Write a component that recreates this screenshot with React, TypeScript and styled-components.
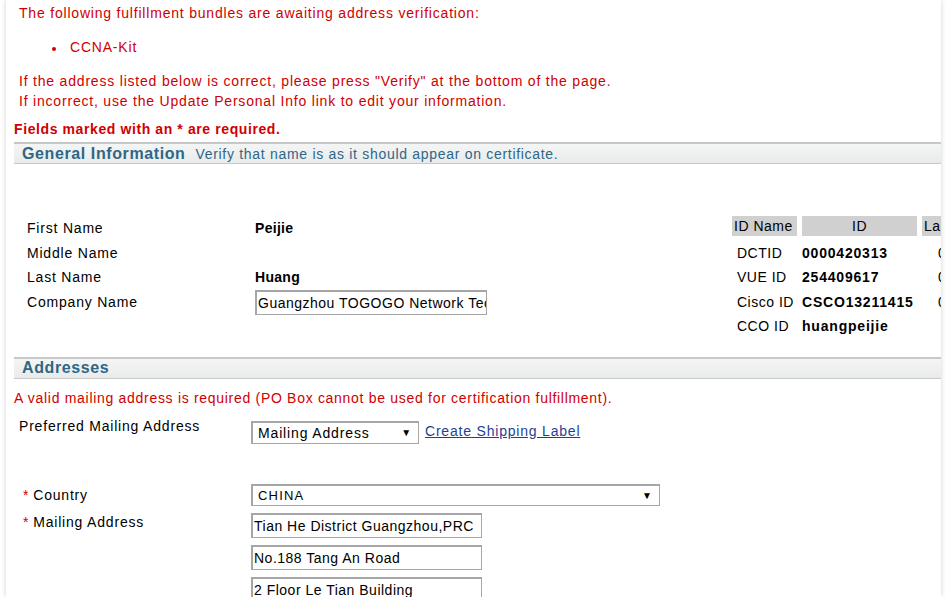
import React from 'react'
import styled, { createGlobalStyle } from 'styled-components'

const Global = createGlobalStyle`
  html, body { margin: 0; padding: 0; background: #fff; }
  body {
    font-family: "Liberation Sans", Arial, sans-serif;
    font-size: 14px;
    letter-spacing: 0.8px;
    color: #000;
  }
`

const Frame = styled.div`
  margin-left: 6px;
  width: 935px;
  height: 597px;
  overflow: hidden;
  background: #fff;
  box-shadow: 0 0 5px rgba(0, 0, 0, 0.18);
`
const Content = styled.div`
  padding-left: 8px;
  width: 1000px;
`
const Notice = styled.div<any>`
  color: #d00000;
  line-height: 20px;
  padding-left: 5px;
  margin-top: ${({ mt }) => mt || 0}px;
`
const BundleList = styled.ul`
  margin: 14px 0 0 0;
  padding-left: 52px;
  color: #d00000;
  line-height: 20px;
  li::marker { font-size: 12px; }
  li { padding-left: 4px; }
`
const Required = styled.div`
  color: #d00000;
  font-weight: bold;
  line-height: 20px;
  letter-spacing: 0.6px;
  margin-top: 8px;
`
const SectionBar = styled.div<any>`
  display: flex;
  align-items: center;
  height: 19px;
  margin-top: ${({ mt }) => mt || 0}px;
  padding-left: 8px;
  border-top: 2px solid #c8c8c8;
  border-bottom: 1px solid #c8c8c8;
  background: linear-gradient(#f4f5f5, #e9ebeb);
  color: #2f6686;
`
const SectionTitle = styled.span`
  font-size: 16px;
  font-weight: bold;
  letter-spacing: 0.6px;
`
const SectionNote = styled.span`
  letter-spacing: 0.7px;
  margin-left: 10px;
`
const InfoWrap = styled.div`
  display: flex;
  margin-top: 52px;
`
const NameTable = styled.div`
  display: grid;
  grid-template-columns: 228px 260px;
  grid-auto-rows: 24.5px;
  padding-left: 13px;
  width: 705px;
  align-content: start;
`
const NameLabel = styled.div`
  display: flex;
  align-items: center;
`
const NameValue = styled.div`
  display: flex;
  align-items: center;
  font-weight: bold;
  letter-spacing: 0.3px;
`
const TextBox = styled.div<any>`
  box-sizing: border-box;
  width: ${({ w }) => w}px;
  height: 25px;
  border: 1px solid #a6a6a6;
  border-left-width: 2px;
  border-top-width: 2px;
  padding-left: ${({ pl }) => pl ?? 1}px;
  display: flex;
  align-items: center;
  font-weight: normal;
  letter-spacing: 0.5px;
  white-space: nowrap;
  overflow: hidden;
  background: #fff;
  margin-top: ${({ mt }) => mt || 0}px;
`
const IdTable = styled.div`
  display: grid;
  grid-template-columns: 65px 115px 40px;
  column-gap: 5px;
  grid-auto-rows: 24.5px;
`
const IdHead = styled.div<any>`
  background: #d0d0d0;
  height: 20px;
  display: flex;
  align-items: center;
  justify-content: ${({ center }) => (center ? 'center' : 'flex-start')};
  padding-left: ${({ center }) => (center ? 0 : 2)}px;
  letter-spacing: 0.5px;
`
const IdName = styled.div`
  display: flex;
  align-items: center;
  padding-left: 5px;
  white-space: nowrap;
  letter-spacing: 0.5px;
`
const IdValue = styled.div`
  display: flex;
  align-items: center;
  font-weight: bold;
  letter-spacing: 0.8px;
`
const IdLang = styled.div`
  display: flex;
  align-items: center;
  padding-left: 16px;
`
const Warning = styled.div`
  color: #d00000;
  line-height: 20px;
  letter-spacing: 0.7px;
  margin-top: 9px;
`
const FormRow = styled.div<any>`
  display: grid;
  grid-template-columns: 237px auto;
  align-items: start;
  margin-top: ${({ mt }) => mt || 0}px;
`
const FormLabel = styled.div<any>`
  line-height: 20px;
  padding-left: ${({ pl }) => pl || 5}px;
  padding-top: ${({ pt }) => pt || 0}px;
`
const Star = styled.span`
  color: #d00000;
  margin-right: 4px;
`
const Inline = styled.div`
  display: flex;
  align-items: center;
  margin-top: 5px;
`
const SelectBox = styled.div<any>`
  box-sizing: border-box;
  width: ${({ w }) => w}px;
  height: ${({ h }) => h}px;
  border: 1px solid #a6a6a6;
  border-left-width: 2px;
  border-top-width: 2px;
  display: flex;
  align-items: center;
  justify-content: space-between;
  padding: 0 6px 0 5px;
  background: #fff;
  font-size: ${({ fs }) => fs || 14}px;
  letter-spacing: ${({ ls }) => ls ?? 0.85}px;
`
const Arrow = styled.span`
  font-size: 10px;
`
const LinkText = styled.a`
  color: #1d3f97;
  text-decoration: underline;
  margin-left: 6px;
  margin-top: -2px;
`
const AddressStack = styled.div`
  display: flex;
  flex-direction: column;
  gap: 7px;
  margin-top: 1px;
`

const names = [
  { label: 'First Name', value: 'Peijie' },
  { label: 'Middle Name', value: '' },
  { label: 'Last Name', value: 'Huang' },
]

const ids = [
  { name: 'DCTID', id: '0000420313', lang: '0' },
  { name: 'VUE ID', id: '254409617', lang: '0' },
  { name: 'Cisco ID', id: 'CSCO13211415', lang: '0' },
  { name: 'CCO ID', id: 'huangpeijie', lang: '' },
]

const App = () => {
  return (
    <Frame>
      <Global />
      <Content>
        <Notice mt={3}>The following fulfillment bundles are awaiting address verification:</Notice>
        <BundleList>
          <li>CCNA-Kit</li>
        </BundleList>
        <Notice mt={14}>If the address listed below is correct, please press "Verify" at the bottom of the page.</Notice>
        <Notice>If incorrect, use the Update Personal Info link to edit your information.</Notice>
        <Required>Fields marked with an * are required.</Required>
        <SectionBar mt={3}>
          <SectionTitle>General Information</SectionTitle>
          <SectionNote>Verify that name is as it should appear on certificate.</SectionNote>
        </SectionBar>
        <InfoWrap>
          <NameTable>
            {names.map((n) => (
              <React.Fragment key={n.label}>
                <NameLabel>{n.label}</NameLabel>
                <NameValue>{n.value}</NameValue>
              </React.Fragment>
            ))}
            <NameLabel>Company Name</NameLabel>
            <NameValue>
              <TextBox w={232} mt={2}>Guangzhou TOGOGO Network Technology</TextBox>
            </NameValue>
          </NameTable>
          <IdTable>
            <IdHead>ID Name</IdHead>
            <IdHead center>ID</IdHead>
            <IdHead>La</IdHead>
            {ids.map((r) => (
              <React.Fragment key={r.name}>
                <IdName>{r.name}</IdName>
                <IdValue>{r.id}</IdValue>
                <IdLang>{r.lang}</IdLang>
              </React.Fragment>
            ))}
          </IdTable>
        </InfoWrap>
        <SectionBar mt={18}>
          <SectionTitle>Addresses</SectionTitle>
        </SectionBar>
        <Warning>A valid mailing address is required (PO Box cannot be used for certification fulfillment).</Warning>
        <FormRow mt={8}>
          <FormLabel>Preferred Mailing Address</FormLabel>
          <Inline>
            <SelectBox w={168} h={23}>
              Mailing Address <Arrow>▼</Arrow>
            </SelectBox>
            <LinkText href="#">Create Shipping Label</LinkText>
          </Inline>
        </FormRow>
        <FormRow mt={40}>
          <FormLabel pl={9} pt={1}>
            <Star>*</Star>Country
          </FormLabel>
          <SelectBox w={409} h={22} fs={13} ls={1.2}>
            CHINA <Arrow>▼</Arrow>
          </SelectBox>
        </FormRow>
        <FormRow mt={6}>
          <FormLabel pl={9}>
            <Star>*</Star>Mailing Address
          </FormLabel>
          <AddressStack>
            <TextBox w={231}>Tian He District Guangzhou,PRC</TextBox>
            <TextBox w={231}>No.188 Tang An Road</TextBox>
            <TextBox w={231}>2 Floor Le Tian Building</TextBox>
          </AddressStack>
        </FormRow>
      </Content>
    </Frame>
  )
}

export default App
